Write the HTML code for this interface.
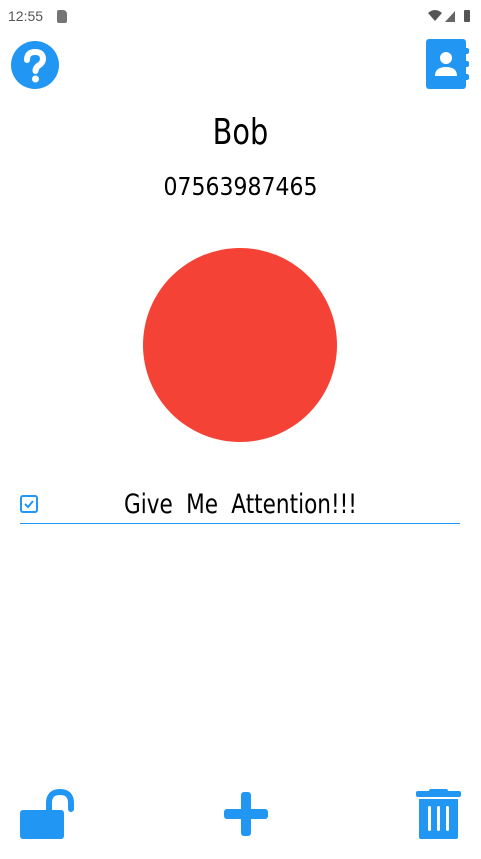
<!DOCTYPE html>
<html><head><meta charset="utf-8"><style>
html,body{margin:0;padding:0;background:#fff;width:481px;height:859px;overflow:hidden;position:relative;font-family:"Liberation Sans",sans-serif}
.a{position:absolute}
.t{position:absolute;left:0;width:481px;text-align:center;color:#000;font-family:"DejaVu Sans","Liberation Sans",sans-serif;transform-origin:center}
</style></head><body>
<div class="a" style="left:8px;top:8px;font-size:14px;color:#555">12:55</div>
<div class="a" style="left:57px;top:10px;width:10px;height:13px;background:#757575;border-radius:2px 4px 2px 2px"></div>
<svg class="a" style="left:427px;top:8px" width="50" height="16"><path d="M1 5 Q8 -1 15 5 L8 13Z" fill="#555"/><path d="M18 14 L28 3 L28 14Z" fill="#666"/><rect x="37" y="2" width="6" height="12" rx="1" fill="#555"/></svg>
<svg class="a" style="left:11px;top:41px" width="48" height="48" viewBox="0 0 48 48"><circle cx="24" cy="24" r="24" fill="#2196f3"/><path d="M16 19 Q16 11 24 11 Q32 11 32 18 Q32 22 27 25 Q24.5 27 24.5 30" stroke="#fff" stroke-width="6" fill="none" stroke-linecap="round"/><circle cx="24.5" cy="38" r="3.5" fill="#fff"/></svg>
<svg class="a" style="left:426px;top:39px" width="45" height="50" viewBox="0 0 45 50"><rect x="0" y="0" width="40" height="50" rx="3" fill="#2196f3"/><rect x="38" y="9" width="5" height="6" rx="2" fill="#2196f3"/><rect x="38" y="22" width="5" height="6" rx="2" fill="#2196f3"/><rect x="38" y="35" width="5" height="6" rx="2" fill="#2196f3"/><circle cx="20" cy="19" r="6" fill="#fff"/><path d="M9 37 Q9 28 20 28 Q31 28 31 37Z" fill="#fff"/></svg>
<div class="t" style="top:112px;font-size:36px;transform:scaleX(0.8)">Bob</div>
<div class="t" style="top:172px;font-size:25px;transform:scaleX(0.88)">07563987465</div>
<div class="a" style="left:143px;top:248px;width:194px;height:194px;border-radius:50%;background:#f44336"></div>
<svg class="a" style="left:20px;top:495px" width="18" height="18"><rect x="1" y="1" width="16" height="16" rx="2" fill="none" stroke="#2196f3" stroke-width="2"/><path d="M5 9 L8 12 L13 6" stroke="#2196f3" stroke-width="2" fill="none"/></svg>
<div class="t" style="top:489px;left:0;font-size:27px;word-spacing:8px;transform:scaleX(0.8)">Give Me Attention!!!</div>
<div class="a" style="left:20px;top:523px;width:440px;height:1px;background:#2196f3"></div>
<svg class="a" style="left:20px;top:789px" width="57" height="51" viewBox="0 0 57 51"><rect x="0" y="21" width="44" height="29" rx="3" fill="#2196f3"/><path d="M29 22 V14 Q29 3 40 3 Q51 3 51 14 V20" stroke="#2196f3" stroke-width="6" fill="none" stroke-linecap="round"/></svg>
<svg class="a" style="left:224px;top:792px" width="44" height="44"><rect x="17" y="0" width="10" height="44" rx="3" fill="#2196f3"/><rect x="0" y="17" width="44" height="10" rx="3" fill="#2196f3"/></svg>
<svg class="a" style="left:416px;top:789px" width="45" height="51" viewBox="0 0 45 51"><rect x="0" y="2" width="45" height="6" rx="2" fill="#2196f3"/><rect x="13" y="0" width="19" height="5" rx="2" fill="#2196f3"/><path d="M3 10 H42 V48 Q42 50 40 50 H5 Q3 50 3 48Z" fill="#2196f3"/><rect x="12" y="17" width="3" height="25" rx="1.5" fill="#fff"/><rect x="21" y="17" width="3" height="25" rx="1.5" fill="#fff"/><rect x="30" y="17" width="3" height="25" rx="1.5" fill="#fff"/></svg>
</body></html>
